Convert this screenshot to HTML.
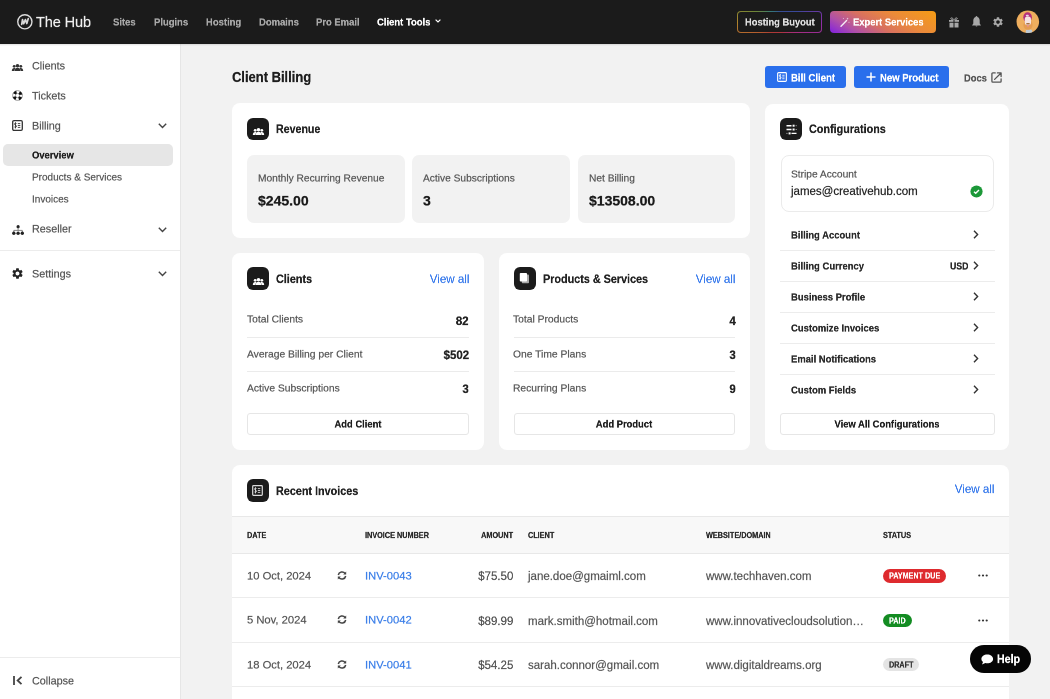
<!DOCTYPE html><html><head><meta charset="utf-8"><style>
html,body{margin:0;padding:0;width:1050px;height:699px;overflow:hidden;background:#f2f2f2;font-family:"Liberation Sans",sans-serif;}
.t{position:absolute;white-space:nowrap;will-change:transform;}
.rg{font-weight:400;-webkit-text-stroke:0.4px currentColor;}
.md{font-weight:400;-webkit-text-stroke:0.35px currentColor;}
.bd{font-weight:700;-webkit-text-stroke:0.5px currentColor;}
svg{position:absolute;overflow:visible;}
</style></head><body>

<div style="position:absolute;left:0px;top:0px;width:1050px;height:44px;background:#1b1b1b;"></div>
<svg style="left:16px;top:13px" width="18" height="18" viewBox="0 0 18 18"><circle cx="8.85" cy="8.8" r="7.1" fill="none" stroke="#dcdcdc" stroke-width="1.4"/><path d="M5.7 11.3 L6.5 6.6 L7.7 10.7 L9.4 6.6 L10.8 10.5 L12.3 5.5" fill="none" stroke="#d8d8d8" stroke-width="1.7" stroke-linejoin="round" stroke-linecap="round"/></svg>
<div class="t rg" style="left:35.90px;top:11.90px;font-size:29.00px;line-height:40px;color:#f0f0f0;transform:scale(0.5000,0.5);transform-origin:left top;letter-spacing:-0.2px;">The Hub</div>
<div class="t bd" style="left:113.00px;top:11.60px;font-size:21.00px;line-height:40px;color:#a8a8a8;transform:scale(0.4500,0.5);transform-origin:left top;">Sites</div>
<div class="t bd" style="left:154.00px;top:11.60px;font-size:21.00px;line-height:40px;color:#a8a8a8;transform:scale(0.4500,0.5);transform-origin:left top;">Plugins</div>
<div class="t bd" style="left:205.80px;top:11.60px;font-size:21.00px;line-height:40px;color:#a8a8a8;transform:scale(0.4500,0.5);transform-origin:left top;">Hosting</div>
<div class="t bd" style="left:258.90px;top:11.60px;font-size:21.00px;line-height:40px;color:#a8a8a8;transform:scale(0.4500,0.5);transform-origin:left top;">Domains</div>
<div class="t bd" style="left:316.10px;top:11.60px;font-size:21.00px;line-height:40px;color:#a8a8a8;transform:scale(0.4500,0.5);transform-origin:left top;">Pro Email</div>
<div class="t bd" style="left:377.40px;top:11.60px;font-size:21.00px;line-height:40px;color:#ffffff;transform:scale(0.4500,0.5);transform-origin:left top;">Client Tools</div>
<svg style="left:435px;top:19px" width="6" height="4" viewBox="0 0 6 4"><path d="M0.6 0.6 L3 3 L5.4 0.6" fill="none" stroke="#fff" stroke-width="1.2"/></svg>
<div style="position:absolute;left:737px;top:11px;width:85px;height:22px;border-radius:4px;opacity:0.85;background:conic-gradient(from 0deg at 50% 50%,#3a58a8 0deg,#4050b0 60deg,#a030c0 90deg,#c03090 120deg,#c83848 165deg,#c84038 220deg,#d07030 250deg,#c89830 270deg,#80983a 292deg,#3a8a8a 320deg,#3a68a0 350deg,#3a58a8 360deg);"></div>
<div style="position:absolute;left:738px;top:12px;width:83px;height:20px;background:#1b1b1b;border-radius:3px;"></div>
<div class="t bd" style="left:745.40px;top:11.80px;font-size:20.80px;line-height:40px;color:#dedede;transform:scale(0.4500,0.5);transform-origin:left top;">Hosting Buyout</div>
<div style="position:absolute;left:829.5px;top:11px;width:106px;height:22px;border-radius:4px;background:linear-gradient(30deg,#8020e0 0%,#b050a8 20%,#d87060 42%,#eb8a3a 66%,#f49c14 100%);"></div>
<svg style="left:840px;top:16.5px" width="10" height="10" viewBox="0 0 10 10"><path d="M1 9.2 L6.6 3.6" stroke="#f4ecf4" stroke-width="1.4" stroke-linecap="round"/><path d="M7.6 0.6 L7.9 1.5 L8.8 1.8 L7.9 2.1 L7.6 3 L7.3 2.1 L6.4 1.8 L7.3 1.5Z M3.4 0.8 L3.6 1.3 L4.1 1.5 L3.6 1.7 L3.4 2.2 L3.2 1.7 L2.7 1.5 L3.2 1.3Z M9 4.6 L9.2 5.1 L9.7 5.3 L9.2 5.5 L9 6 L8.8 5.5 L8.3 5.3 L8.8 5.1Z" fill="#f4ecf4"/></svg>
<div class="t bd" style="left:853.40px;top:12.10px;font-size:20.90px;line-height:40px;color:#ffffff;transform:scale(0.4500,0.5);transform-origin:left top;">Expert Services</div>
<svg style="left:949px;top:16.5px" width="10" height="11" viewBox="0 0 10 11"><path d="M4.6 2.4 C3.6 0.6 1.6 0.4 1.7 1.6 C1.8 2.6 3.4 2.5 4.6 2.4Z M5.4 2.4 C6.4 0.6 8.4 0.4 8.3 1.6 C8.2 2.6 6.6 2.5 5.4 2.4Z" fill="none" stroke="#a8a8a8" stroke-width="0.9"/><rect x="0" y="3" width="4.5" height="1.8" fill="#a8a8a8"/><rect x="5.5" y="3" width="4.5" height="1.8" fill="#a8a8a8"/><rect x="0.5" y="5.7" width="4" height="4.8" fill="#a8a8a8"/><rect x="5.5" y="5.7" width="4" height="4.8" fill="#a8a8a8"/></svg>
<svg style="left:971.5px;top:16.3px" width="9" height="11" viewBox="0 0 9 11"><path d="M4.5 0 C5 0 5.4 0.4 5.4 0.9 C7.1 1.4 7.7 2.9 7.7 4.6 L7.7 7.6 L9 9.5 L0 9.5 L1.3 7.6 L1.3 4.6 C1.3 2.9 1.9 1.4 3.6 0.9 C3.6 0.4 4 0 4.5 0Z M3.5 9.8 L5.5 9.8 C5.5 10.3 5.1 10.5 4.5 10.5 C3.9 10.5 3.5 10.3 3.5 9.8Z" fill="#a8a8a8"/></svg>
<svg style="left:992px;top:16px" width="12" height="12" viewBox="0 0 24 24"><path fill="#a8a8a8" d="M19.14 12.94c.04-.3.06-.61.06-.94 0-.32-.02-.64-.07-.94l2.03-1.58a.49.49 0 0 0 .12-.61l-1.92-3.32a.488.488 0 0 0-.59-.22l-2.39.96c-.5-.38-1.03-.7-1.62-.94l-.36-2.54a.484.484 0 0 0-.48-.41h-3.84c-.24 0-.43.17-.47.41l-.36 2.54c-.59.24-1.13.57-1.62.94l-2.39-.96c-.22-.08-.47 0-.59.22L2.74 8.87c-.12.21-.08.47.12.61l2.03 1.58c-.05.3-.09.63-.09.94s.02.64.07.94l-2.03 1.58a.49.49 0 0 0-.12.61l1.92 3.32c.12.22.37.29.59.22l2.39-.96c.5.38 1.03.7 1.62.94l.36 2.54c.05.24.24.41.48.41h3.84c.24 0 .44-.17.47-.41l.36-2.54c.59-.24 1.13-.56 1.62-.94l2.39.96c.22.08.47 0 .59-.22l1.92-3.32c.12-.22.07-.47-.12-.61l-2.01-1.58zM12 15.6c-1.98 0-3.6-1.62-3.6-3.6s1.62-3.6 3.6-3.6 3.6 1.62 3.6 3.6-1.62 3.6-3.6 3.6z"/></svg>
<svg style="left:1016px;top:10px" width="24" height="24" viewBox="0 0 24 24"><defs><clipPath id="av"><circle cx="11.8" cy="11.7" r="11.3"/></clipPath></defs><circle cx="11.8" cy="11.7" r="11.3" fill="#eeae5e"/><g clip-path="url(#av)"><rect x="9.8" y="19.4" width="6.4" height="6" rx="1.5" fill="#bccad6"/><ellipse cx="12" cy="15" rx="4.6" ry="4.8" fill="#e49c52"/><ellipse cx="11.6" cy="7.2" rx="4.3" ry="4.9" fill="#b4307c"/><rect x="8.8" y="6.6" width="6.2" height="8.6" rx="2.6" fill="#f6e4e2"/><rect x="9.8" y="4.8" width="3" height="1.6" rx="0.8" fill="#e8d8e8"/><rect x="10.2" y="13.1" width="3.6" height="1.4" rx="0.6" fill="#a8703e"/><rect x="11.2" y="15" width="1.5" height="1.8" rx="0.6" fill="#e88a9a"/></g></svg>
<div style="position:absolute;left:0px;top:44px;width:180px;height:655px;background:#ffffff;border-right:1px solid #e6e6e6;"></div>
<div style="position:absolute;left:0px;top:44px;width:1050px;height:2px;background:linear-gradient(rgba(0,0,0,0.12),rgba(0,0,0,0));"></div>
<svg style="left:12px;top:64px" width="11.0" height="7.0" viewBox="0 0 11 7"><circle cx="5.5" cy="1.8" r="1.8" fill="#333"/><circle cx="2.2" cy="2.3" r="1.4" fill="#333"/><circle cx="8.8" cy="2.3" r="1.4" fill="#333"/><path d="M2.6 7 C2.6 4.9 3.9 3.7 5.5 3.7 C7.1 3.7 8.4 4.9 8.4 7Z" fill="#333"/><path d="M-0.2 7 C-0.2 5 0.8 3.9 2.2 3.9 C3 3.9 3.6 4.3 3.6 4.3 C2.8 5.1 2.4 6 2.4 7Z" fill="#333"/><path d="M11.2 7 C11.2 5 10.2 3.9 8.8 3.9 C8 3.9 7.4 4.3 7.4 4.3 C8.2 5.1 8.6 6 8.6 7Z" fill="#333"/></svg>
<div class="t rg" style="left:32.00px;top:56.40px;font-size:21.60px;line-height:40px;color:#555;transform:scale(0.5000,0.5);transform-origin:left top;">Clients</div>
<svg style="left:12px;top:90px" width="11" height="11" viewBox="0 0 11 11"><circle cx="5.5" cy="5.5" r="4.9" fill="none" stroke="#777" stroke-width="0.7"/><circle cx="5.5" cy="5.5" r="2.1" fill="none" stroke="#777" stroke-width="0.7"/><circle cx="5.5" cy="5.5" r="3.5" fill="none" stroke="#111" stroke-width="2.9" stroke-dasharray="2.7 2.8" stroke-dashoffset="-1.4"/></svg>
<div class="t rg" style="left:32.00px;top:86.20px;font-size:21.60px;line-height:40px;color:#555;transform:scale(0.5000,0.5);transform-origin:left top;">Tickets</div>
<svg style="left:12px;top:120px" width="11" height="11" viewBox="0 0 11 11"><rect x="0.7" y="0.7" width="9.6" height="9.6" rx="1.2" fill="none" stroke="#333" stroke-width="1.3"/><path d="M4.5 3.5 C4.1 2.9 2.5 2.9 2.5 4.1 C2.5 5.3 4.5 4.9 4.5 6.3 C4.5 7.5 2.8 7.5 2.4 6.9 M3.5 2.4 V8.4 M5.8 3.6 H8.3 M5.8 5.5 H8.3 M5.8 7.4 H8.3" fill="none" stroke="#333" stroke-width="0.9"/></svg>
<div class="t rg" style="left:32.00px;top:115.70px;font-size:21.60px;line-height:40px;color:#555;transform:scale(0.5000,0.5);transform-origin:left top;">Billing</div>
<svg style="left:157.5px;top:122.5px" width="9" height="6" viewBox="0 0 9 6"><path d="M0.8 0.8 L4.5 4.5 L8.2 0.8" fill="none" stroke="#444" stroke-width="1.4"/></svg>
<div style="position:absolute;left:3px;top:144px;width:170px;height:22px;background:#e6e6e6;border-radius:5px;"></div>
<div class="t bd" style="left:32.00px;top:144.70px;font-size:20.90px;line-height:40px;color:#1e1e1e;transform:scale(0.4500,0.5);transform-origin:left top;">Overview</div>
<div class="t rg" style="left:32.00px;top:167.30px;font-size:20.00px;line-height:40px;color:#555;transform:scale(0.5000,0.5);transform-origin:left top;">Products &amp; Services</div>
<div class="t rg" style="left:32.00px;top:189.10px;font-size:20.00px;line-height:40px;color:#555;transform:scale(0.5000,0.5);transform-origin:left top;">Invoices</div>
<svg style="left:11.5px;top:224.5px" width="12" height="10" viewBox="0 0 12 10"><circle cx="6.1" cy="1.7" r="1.6" fill="#222"/><path d="M6.1 2.5 V5.4 M1.8 7.8 V5.4 H10.3 V7.8" fill="none" stroke="#555" stroke-width="0.7"/><circle cx="1.8" cy="8.2" r="1.7" fill="#222"/><circle cx="6.1" cy="8.2" r="1.7" fill="#222"/><circle cx="10.3" cy="8.2" r="1.7" fill="#222"/></svg>
<div class="t rg" style="left:32.00px;top:219.20px;font-size:21.60px;line-height:40px;color:#555;transform:scale(0.5000,0.5);transform-origin:left top;">Reseller</div>
<svg style="left:157.5px;top:226.5px" width="9" height="6" viewBox="0 0 9 6"><path d="M0.8 0.8 L4.5 4.5 L8.2 0.8" fill="none" stroke="#444" stroke-width="1.4"/></svg>
<div style="position:absolute;left:0px;top:250px;width:180px;height:1px;background:#ececec;"></div>
<svg style="left:11px;top:267px" width="13" height="13" viewBox="0 0 24 24"><path fill="#222" d="M19.14 12.94c.04-.3.06-.61.06-.94 0-.32-.02-.64-.07-.94l2.03-1.58a.49.49 0 0 0 .12-.61l-1.92-3.32a.488.488 0 0 0-.59-.22l-2.39.96c-.5-.38-1.030-.7-1.62-.94l-.36-2.54a.484.484 0 0 0-.48-.41h-3.84c-.24 0-.43.17-.47.41l-.36 2.54c-.59.24-1.13.57-1.62.94l-2.39-.96c-.22-.08-.47 0-.59.22L2.74 8.87c-.12.21-.08.47.12.61l2.03 1.58c-.05.3-.09.63-.09.94s.02.64.07.94l-2.03 1.58a.49.49 0 0 0-.12.61l1.92 3.32c.12.22.37.29.59.22l2.39-.96c.5.38 1.03.7 1.62.94l.36 2.54c.05.24.24.41.48.41h3.840c.24 0 .44-.17.47-.41l.36-2.54c.59-.24 1.13-.56 1.62-.94l2.39.96c.22.08.47 0 .59-.22l1.92-3.32c.12-.22.07-.47-.12-.61l-2.01-1.58zM12 15.6c-1.98 0-3.6-1.62-3.6-3.6s1.62-3.6 3.6-3.6 3.6 1.62 3.6 3.6-1.62 3.6-3.6 3.6z"/></svg>
<div class="t rg" style="left:32.00px;top:263.80px;font-size:21.60px;line-height:40px;color:#555;transform:scale(0.5000,0.5);transform-origin:left top;">Settings</div>
<svg style="left:157.5px;top:270.5px" width="9" height="6" viewBox="0 0 9 6"><path d="M0.8 0.8 L4.5 4.5 L8.2 0.8" fill="none" stroke="#444" stroke-width="1.4"/></svg>
<div style="position:absolute;left:0px;top:657px;width:180px;height:1px;background:#ececec;"></div>
<svg style="left:13px;top:676px" width="10" height="9" viewBox="0 0 10 9"><path d="M1 0 V9" stroke="#444" stroke-width="1.8"/><path d="M8.5 0.8 L4.6 4.5 L8.5 8.2" fill="none" stroke="#444" stroke-width="1.8"/></svg>
<div class="t rg" style="left:32.00px;top:671.00px;font-size:21.60px;line-height:40px;color:#555;transform:scale(0.5000,0.5);transform-origin:left top;">Collapse</div>
<div class="t bd" style="left:231.90px;top:67.00px;font-size:28.80px;line-height:40px;color:#1e1e1e;transform:scale(0.4500,0.5);transform-origin:left top;">Client Billing</div>
<div style="position:absolute;left:765px;top:66px;width:81px;height:22px;background:#2a6fec;border-radius:3px;"></div>
<svg style="left:777px;top:72px" width="10" height="10" viewBox="0 0 11 11"><rect x="0.7" y="0.7" width="9.6" height="9.6" rx="1" fill="none" stroke="#fff" stroke-width="1.2"/><path d="M4.5 3.5 C4.1 2.9 2.5 2.9 2.5 4.1 C2.5 5.3 4.5 4.9 4.5 6.3 C4.5 7.5 2.8 7.5 2.4 6.9 M3.5 2.4 V8.4 M5.8 3.6 H8.3 M5.8 5.5 H8.3 M5.8 7.4 H8.3" fill="none" stroke="#fff" stroke-width="0.9"/></svg>
<div class="t bd" style="left:791.10px;top:67.50px;font-size:21.20px;line-height:40px;color:#fff;transform:scale(0.4500,0.5);transform-origin:left top;">Bill Client</div>
<div style="position:absolute;left:854px;top:66px;width:95px;height:22px;background:#2a6fec;border-radius:3px;"></div>
<svg style="left:866px;top:72px" width="10" height="10" viewBox="0 0 10 10"><path d="M5 0.5 V9.5 M0.5 5 H9.5" stroke="#fff" stroke-width="1.5"/></svg>
<div class="t bd" style="left:880.00px;top:67.50px;font-size:21.20px;line-height:40px;color:#fff;transform:scale(0.4500,0.5);transform-origin:left top;">New Product</div>
<div class="t bd" style="left:963.60px;top:67.50px;font-size:20.80px;line-height:40px;color:#555;transform:scale(0.4500,0.5);transform-origin:left top;">Docs</div>
<svg style="left:991px;top:72px" width="11" height="11" viewBox="0 0 11 11"><path d="M4.2 0.9 H1.8 Q0.9 0.9 0.9 1.8 V9.2 Q0.9 10.1 1.8 10.1 H9.2 Q10.1 10.1 10.1 9.2 V6.8" fill="none" stroke="#555" stroke-width="1.3" stroke-linecap="round"/><path d="M6.4 0.9 H10.1 V4.6 M9.8 1.2 L3.6 7.4" fill="none" stroke="#555" stroke-width="1.3" stroke-linecap="round" stroke-linejoin="round"/></svg>
<div style="position:absolute;left:232px;top:103px;width:518px;height:135px;background:#fff;border-radius:8px;"></div>
<div style="position:absolute;left:247px;top:117.5px;width:22.3px;height:22.3px;background:#1b1b1b;border-radius:6px;"></div>
<svg style="left:252.5px;top:127.5px" width="11.0" height="7.0" viewBox="0 0 11 7"><circle cx="5.5" cy="1.8" r="1.8" fill="#fff"/><circle cx="2.2" cy="2.3" r="1.4" fill="#fff"/><circle cx="8.8" cy="2.3" r="1.4" fill="#fff"/><path d="M2.6 7 C2.6 4.9 3.9 3.7 5.5 3.7 C7.1 3.7 8.4 4.9 8.4 7Z" fill="#fff"/><path d="M-0.2 7 C-0.2 5 0.8 3.9 2.2 3.9 C3 3.9 3.6 4.3 3.6 4.3 C2.8 5.1 2.4 6 2.4 7Z" fill="#fff"/><path d="M11.2 7 C11.2 5 10.2 3.9 8.8 3.9 C8 3.9 7.4 4.3 7.4 4.3 C8.2 5.1 8.6 6 8.6 7Z" fill="#fff"/></svg>
<div class="t bd" style="left:276.40px;top:119.20px;font-size:23.60px;line-height:40px;color:#222;transform:scale(0.4500,0.5);transform-origin:left top;">Revenue</div>
<div style="position:absolute;left:247px;top:155px;width:157.5px;height:68px;background:#f2f2f2;border-radius:7px;"></div>
<div class="t rg" style="left:257.70px;top:167.50px;font-size:20.40px;line-height:40px;color:#555;transform:scale(0.5000,0.5);transform-origin:left top;">Monthly Recurring Revenue</div>
<div class="t bd" style="left:257.70px;top:190.50px;font-size:28.00px;line-height:40px;color:#1a1a1a;transform:scale(0.5000,0.5);transform-origin:left top;">$245.00</div>
<div style="position:absolute;left:412px;top:155px;width:157.5px;height:68px;background:#f2f2f2;border-radius:7px;"></div>
<div class="t rg" style="left:422.70px;top:167.50px;font-size:20.40px;line-height:40px;color:#555;transform:scale(0.5000,0.5);transform-origin:left top;">Active Subscriptions</div>
<div class="t bd" style="left:422.70px;top:190.50px;font-size:28.00px;line-height:40px;color:#1a1a1a;transform:scale(0.5000,0.5);transform-origin:left top;">3</div>
<div style="position:absolute;left:578px;top:155px;width:157px;height:68px;background:#f2f2f2;border-radius:7px;"></div>
<div class="t rg" style="left:588.70px;top:167.50px;font-size:20.40px;line-height:40px;color:#555;transform:scale(0.5000,0.5);transform-origin:left top;">Net Billing</div>
<div class="t bd" style="left:588.70px;top:190.50px;font-size:28.00px;line-height:40px;color:#1a1a1a;transform:scale(0.5000,0.5);transform-origin:left top;">$13508.00</div>
<div style="position:absolute;left:232px;top:252.5px;width:252px;height:197px;background:#fff;border-radius:8px;"></div>
<div style="position:absolute;left:247px;top:267.3px;width:22.3px;height:22.3px;background:#1b1b1b;border-radius:6px;"></div>
<svg style="left:252.5px;top:277.5px" width="11.0" height="7.0" viewBox="0 0 11 7"><circle cx="5.5" cy="1.8" r="1.8" fill="#fff"/><circle cx="2.2" cy="2.3" r="1.4" fill="#fff"/><circle cx="8.8" cy="2.3" r="1.4" fill="#fff"/><path d="M2.6 7 C2.6 4.9 3.9 3.7 5.5 3.7 C7.1 3.7 8.4 4.9 8.4 7Z" fill="#fff"/><path d="M-0.2 7 C-0.2 5 0.8 3.9 2.2 3.9 C3 3.9 3.6 4.3 3.6 4.3 C2.8 5.1 2.4 6 2.4 7Z" fill="#fff"/><path d="M11.2 7 C11.2 5 10.2 3.9 8.8 3.9 C8 3.9 7.4 4.3 7.4 4.3 C8.2 5.1 8.6 6 8.6 7Z" fill="#fff"/></svg>
<div class="t bd" style="left:276.00px;top:269.00px;font-size:24.00px;line-height:40px;color:#222;transform:scale(0.4500,0.5);transform-origin:left top;">Clients</div>
<div class="t rg" style="right:580.80px;top:269.00px;font-size:23.20px;line-height:40px;color:#3b7cec;transform:scale(0.5000,0.5);transform-origin:right top;">View all</div>
<div class="t rg" style="left:246.90px;top:309.40px;font-size:20.60px;line-height:40px;color:#555;transform:scale(0.5000,0.5);transform-origin:left top;">Total Clients</div>
<div class="t bd" style="right:581.20px;top:311.30px;font-size:23.00px;line-height:40px;color:#222;transform:scale(0.5000,0.5);transform-origin:right top;">82</div>
<div class="t rg" style="left:246.90px;top:343.60px;font-size:20.60px;line-height:40px;color:#555;transform:scale(0.5000,0.5);transform-origin:left top;">Average Billing per Client</div>
<div class="t bd" style="right:581.20px;top:345.30px;font-size:23.00px;line-height:40px;color:#222;transform:scale(0.5000,0.5);transform-origin:right top;">$502</div>
<div class="t rg" style="left:246.90px;top:377.80px;font-size:20.60px;line-height:40px;color:#555;transform:scale(0.5000,0.5);transform-origin:left top;">Active Subscriptions</div>
<div class="t bd" style="right:581.20px;top:379.30px;font-size:23.00px;line-height:40px;color:#222;transform:scale(0.5000,0.5);transform-origin:right top;">3</div>
<div style="position:absolute;left:247px;top:337px;width:221.6px;height:1px;background:#ebebeb;"></div>
<div style="position:absolute;left:247px;top:371.3px;width:221.6px;height:1px;background:#ebebeb;"></div>
<div style="position:absolute;left:247px;top:413.3px;width:221.6px;height:22px;background:#fff;border:1px solid #e6e6e6;border-radius:3px;box-sizing:border-box;"></div>
<div class="t bd" style="left:-142.20px;width:1000px;text-align:center;top:413.80px;font-size:20.90px;line-height:40px;color:#1e1e1e;transform:scale(0.4500,0.5);transform-origin:center top;">Add Client</div>
<div style="position:absolute;left:498.5px;top:252.5px;width:251.5px;height:197px;background:#fff;border-radius:8px;"></div>
<div style="position:absolute;left:513.5px;top:267.3px;width:22.3px;height:22.3px;background:#1b1b1b;border-radius:6px;"></div>
<svg style="left:519px;top:272px" width="11" height="13" viewBox="0 0 11 13"><rect x="2.8" y="2.6" width="7.2" height="8.6" rx="0.8" fill="#aaa"/><rect x="0.8" y="0.9" width="7.2" height="8.6" rx="0.8" fill="#fff"/></svg>
<div class="t bd" style="left:542.60px;top:269.00px;font-size:24.00px;line-height:40px;color:#222;transform:scale(0.4500,0.5);transform-origin:left top;">Products &amp; Services</div>
<div class="t rg" style="right:314.20px;top:269.00px;font-size:23.20px;line-height:40px;color:#3b7cec;transform:scale(0.5000,0.5);transform-origin:right top;">View all</div>
<div class="t rg" style="left:513.20px;top:309.40px;font-size:20.60px;line-height:40px;color:#555;transform:scale(0.5000,0.5);transform-origin:left top;">Total Products</div>
<div class="t bd" style="right:314.60px;top:311.30px;font-size:23.00px;line-height:40px;color:#222;transform:scale(0.5000,0.5);transform-origin:right top;">4</div>
<div class="t rg" style="left:513.20px;top:343.60px;font-size:20.60px;line-height:40px;color:#555;transform:scale(0.5000,0.5);transform-origin:left top;">One Time Plans</div>
<div class="t bd" style="right:314.60px;top:345.30px;font-size:23.00px;line-height:40px;color:#222;transform:scale(0.5000,0.5);transform-origin:right top;">3</div>
<div class="t rg" style="left:513.20px;top:377.80px;font-size:20.60px;line-height:40px;color:#555;transform:scale(0.5000,0.5);transform-origin:left top;">Recurring Plans</div>
<div class="t bd" style="right:314.60px;top:379.30px;font-size:23.00px;line-height:40px;color:#222;transform:scale(0.5000,0.5);transform-origin:right top;">9</div>
<div style="position:absolute;left:513.5px;top:337px;width:221.7px;height:1px;background:#ebebeb;"></div>
<div style="position:absolute;left:513.5px;top:371.3px;width:221.7px;height:1px;background:#ebebeb;"></div>
<div style="position:absolute;left:513.5px;top:413.3px;width:221.7px;height:22px;background:#fff;border:1px solid #e6e6e6;border-radius:3px;box-sizing:border-box;"></div>
<div class="t bd" style="left:124.30px;width:1000px;text-align:center;top:413.80px;font-size:20.90px;line-height:40px;color:#1e1e1e;transform:scale(0.4500,0.5);transform-origin:center top;">Add Product</div>
<div style="position:absolute;left:765px;top:103.5px;width:244px;height:346px;background:#fff;border-radius:8px;"></div>
<div style="position:absolute;left:780px;top:118px;width:22.3px;height:22.3px;background:#1b1b1b;border-radius:6px;"></div>
<svg style="left:785.5px;top:123.5px" width="11" height="11" viewBox="0 0 11 11"><path d="M0.5 1.7 H5.5 M0.5 5.5 H5.5 M5.5 9.4 H10.5" stroke="#fff" stroke-width="1.4"/><rect x="6.6" y="0.7" width="2" height="2" fill="#fff"/><rect x="6.6" y="4.5" width="2" height="2" fill="#fff"/><rect x="2.6" y="8.4" width="2" height="2" fill="#fff"/><rect x="9.7" y="1.2" width="0.9" height="1" fill="#ccc"/><rect x="9.7" y="5" width="0.9" height="1" fill="#ccc"/><rect x="0.5" y="8.9" width="0.9" height="1" fill="#ccc"/></svg>
<div class="t bd" style="left:809.20px;top:118.90px;font-size:24.00px;line-height:40px;color:#222;transform:scale(0.4500,0.5);transform-origin:left top;">Configurations</div>
<div style="position:absolute;left:780.5px;top:155px;width:213.5px;height:56.5px;background:#fff;border:1px solid #ebebeb;border-radius:8px;box-sizing:border-box;"></div>
<div class="t rg" style="left:790.60px;top:164.00px;font-size:20.40px;line-height:40px;color:#555;transform:scale(0.5000,0.5);transform-origin:left top;">Stripe Account</div>
<div class="t rg" style="left:790.60px;top:181.30px;font-size:23.00px;line-height:40px;color:#222;transform:scale(0.5000,0.5);transform-origin:left top;">james@creativehub.com</div>
<svg style="left:969.5px;top:184.5px" width="13" height="13" viewBox="0 0 13 13"><circle cx="6.5" cy="6.5" r="6.1" fill="#1c9838"/><path d="M4 6.7 L5.7 8.2 L9 5" fill="none" stroke="#fff" stroke-width="1.4"/></svg>
<div class="t bd" style="left:790.50px;top:224.80px;font-size:21.00px;line-height:40px;color:#2a2a2a;transform:scale(0.4500,0.5);transform-origin:left top;">Billing Account</div>
<svg style="left:973px;top:229.8px" width="6" height="9" viewBox="0 0 6 9"><path d="M1 0.8 L4.6 4.5 L1 8.2" fill="none" stroke="#333" stroke-width="1.4"/></svg>
<div style="position:absolute;left:780px;top:250px;width:214.5px;height:1px;background:#ececec;"></div>
<div class="t bd" style="left:790.50px;top:255.80px;font-size:21.00px;line-height:40px;color:#2a2a2a;transform:scale(0.4500,0.5);transform-origin:left top;">Billing Currency</div>
<svg style="left:973px;top:260.8px" width="6" height="9" viewBox="0 0 6 9"><path d="M1 0.8 L4.6 4.5 L1 8.2" fill="none" stroke="#333" stroke-width="1.4"/></svg>
<div style="position:absolute;left:780px;top:281px;width:214.5px;height:1px;background:#ececec;"></div>
<div class="t bd" style="left:790.50px;top:286.80px;font-size:21.00px;line-height:40px;color:#2a2a2a;transform:scale(0.4500,0.5);transform-origin:left top;">Business Profile</div>
<svg style="left:973px;top:291.8px" width="6" height="9" viewBox="0 0 6 9"><path d="M1 0.8 L4.6 4.5 L1 8.2" fill="none" stroke="#333" stroke-width="1.4"/></svg>
<div style="position:absolute;left:780px;top:312px;width:214.5px;height:1px;background:#ececec;"></div>
<div class="t bd" style="left:790.50px;top:317.80px;font-size:21.00px;line-height:40px;color:#2a2a2a;transform:scale(0.4500,0.5);transform-origin:left top;">Customize Invoices</div>
<svg style="left:973px;top:322.8px" width="6" height="9" viewBox="0 0 6 9"><path d="M1 0.8 L4.6 4.5 L1 8.2" fill="none" stroke="#333" stroke-width="1.4"/></svg>
<div style="position:absolute;left:780px;top:343px;width:214.5px;height:1px;background:#ececec;"></div>
<div class="t bd" style="left:790.50px;top:348.80px;font-size:21.00px;line-height:40px;color:#2a2a2a;transform:scale(0.4500,0.5);transform-origin:left top;">Email Notifications</div>
<svg style="left:973px;top:353.8px" width="6" height="9" viewBox="0 0 6 9"><path d="M1 0.8 L4.6 4.5 L1 8.2" fill="none" stroke="#333" stroke-width="1.4"/></svg>
<div style="position:absolute;left:780px;top:374px;width:214.5px;height:1px;background:#ececec;"></div>
<div class="t bd" style="left:790.50px;top:379.80px;font-size:21.00px;line-height:40px;color:#2a2a2a;transform:scale(0.4500,0.5);transform-origin:left top;">Custom Fields</div>
<svg style="left:973px;top:384.8px" width="6" height="9" viewBox="0 0 6 9"><path d="M1 0.8 L4.6 4.5 L1 8.2" fill="none" stroke="#333" stroke-width="1.4"/></svg>
<div class="t bd" style="right:81.80px;top:255.70px;font-size:20.60px;line-height:40px;color:#2a2a2a;transform:scale(0.4250,0.5);transform-origin:right top;">USD</div>
<div style="position:absolute;left:780px;top:413.3px;width:214.5px;height:22px;background:#fff;border:1px solid #e6e6e6;border-radius:3px;box-sizing:border-box;"></div>
<div class="t bd" style="left:387.00px;width:1000px;text-align:center;top:413.80px;font-size:20.90px;line-height:40px;color:#1e1e1e;transform:scale(0.4500,0.5);transform-origin:center top;">View All Configurations</div>
<div style="position:absolute;left:232px;top:465px;width:777px;height:260px;background:#fff;border-radius:8px;"></div>
<div style="position:absolute;left:247px;top:479.3px;width:22.3px;height:22.3px;background:#1b1b1b;border-radius:6px;"></div>
<svg style="left:252.3px;top:484.8px" width="11" height="11" viewBox="0 0 11 11"><rect x="0.7" y="0.7" width="9.6" height="9.6" rx="0.8" fill="none" stroke="#ddd" stroke-width="1.2"/><path d="M4.5 3.5 C4.1 2.9 2.5 2.9 2.5 4.1 C2.5 5.3 4.5 4.9 4.5 6.3 C4.5 7.5 2.8 7.5 2.4 6.9 M3.5 2.4 V8.4 M5.8 3.6 H8.3 M5.8 5.5 H8.3 M5.8 7.4 H8.3" fill="none" stroke="#ddd" stroke-width="0.9"/></svg>
<div class="t bd" style="left:276.20px;top:481.30px;font-size:24.00px;line-height:40px;color:#222;transform:scale(0.4500,0.5);transform-origin:left top;">Recent Invoices</div>
<div class="t rg" style="right:55.40px;top:478.80px;font-size:23.20px;line-height:40px;color:#3b7cec;transform:scale(0.5000,0.5);transform-origin:right top;">View all</div>
<div style="position:absolute;left:232px;top:516px;width:777px;height:38px;background:#f8f8f8;border-top:1px solid #e8e8e8;border-bottom:1px solid #e8e8e8;box-sizing:border-box;"></div>
<div class="t bd" style="left:246.80px;top:525.00px;font-size:16.20px;line-height:40px;color:#2a2a2a;transform:scale(0.4500,0.5);transform-origin:left top;">DATE</div>
<div class="t bd" style="left:365.20px;top:525.00px;font-size:16.20px;line-height:40px;color:#2a2a2a;transform:scale(0.4500,0.5);transform-origin:left top;">INVOICE NUMBER</div>
<div class="t bd" style="left:527.90px;top:525.00px;font-size:16.20px;line-height:40px;color:#2a2a2a;transform:scale(0.4500,0.5);transform-origin:left top;">CLIENT</div>
<div class="t bd" style="left:705.90px;top:525.00px;font-size:16.20px;line-height:40px;color:#2a2a2a;transform:scale(0.4500,0.5);transform-origin:left top;">WEBSITE/DOMAIN</div>
<div class="t bd" style="left:883.10px;top:525.00px;font-size:16.20px;line-height:40px;color:#2a2a2a;transform:scale(0.4500,0.5);transform-origin:left top;">STATUS</div>
<div class="t bd" style="right:536.60px;top:525.00px;font-size:16.20px;line-height:40px;color:#2a2a2a;transform:scale(0.4500,0.5);transform-origin:right top;">AMOUNT</div>
<div class="t rg" style="left:246.60px;top:565.90px;font-size:22.40px;line-height:40px;color:#555;transform:scale(0.5000,0.5);transform-origin:left top;">10 Oct, 2024</div>
<svg style="left:336.5px;top:571.2px" width="10" height="9" viewBox="0 0 10 9"><path d="M1.3 4 A3.8 3.6 0 0 1 8.2 2.6" fill="none" stroke="#444" stroke-width="1.5"/><path d="M9.2 0.6 L9.2 3.6 L6.2 3.6Z" fill="#444"/><path d="M8.7 5 A3.8 3.6 0 0 1 1.8 6.4" fill="none" stroke="#444" stroke-width="1.5"/><path d="M0.8 8.4 L0.8 5.4 L3.8 5.4Z" fill="#444"/></svg>
<div class="t rg" style="left:364.70px;top:565.90px;font-size:22.40px;line-height:40px;color:#3a7ee8;transform:scale(0.5000,0.5);transform-origin:left top;">INV-0043</div>
<div class="t rg" style="right:536.20px;top:566.30px;font-size:23.00px;line-height:40px;color:#555;transform:scale(0.5000,0.5);transform-origin:right top;">$75.50</div>
<div class="t rg" style="left:528.00px;top:566.30px;font-size:23.00px;line-height:40px;color:#555;transform:scale(0.5000,0.5);transform-origin:left top;">jane.doe@gmaiml.com</div>
<div class="t rg" style="left:706.20px;top:566.30px;font-size:23.00px;line-height:40px;color:#555;transform:scale(0.5000,0.5);transform-origin:left top;">www.techhaven.com</div>
<div style="position:absolute;left:232px;top:597.4px;width:777px;height:1px;background:#ececec;"></div>
<div style="position:absolute;left:978px;top:574.4px;width:10px;height:3px;"><svg width="10" height="3" viewBox="0 0 10 3" style="position:absolute;left:0;top:0"><circle cx="1.3" cy="1.5" r="1.1" fill="#333"/><circle cx="5" cy="1.5" r="1.1" fill="#333"/><circle cx="8.7" cy="1.5" r="1.1" fill="#333"/></svg></div>
<div class="t rg" style="left:246.60px;top:610.10px;font-size:22.40px;line-height:40px;color:#555;transform:scale(0.5000,0.5);transform-origin:left top;">5 Nov, 2024</div>
<svg style="left:336.5px;top:615.4px" width="10" height="9" viewBox="0 0 10 9"><path d="M1.3 4 A3.8 3.6 0 0 1 8.2 2.6" fill="none" stroke="#444" stroke-width="1.5"/><path d="M9.2 0.6 L9.2 3.6 L6.2 3.6Z" fill="#444"/><path d="M8.7 5 A3.8 3.6 0 0 1 1.8 6.4" fill="none" stroke="#444" stroke-width="1.5"/><path d="M0.8 8.4 L0.8 5.4 L3.8 5.4Z" fill="#444"/></svg>
<div class="t rg" style="left:364.70px;top:610.10px;font-size:22.40px;line-height:40px;color:#3a7ee8;transform:scale(0.5000,0.5);transform-origin:left top;">INV-0042</div>
<div class="t rg" style="right:536.20px;top:610.50px;font-size:23.00px;line-height:40px;color:#555;transform:scale(0.5000,0.5);transform-origin:right top;">$89.99</div>
<div class="t rg" style="left:528.00px;top:610.50px;font-size:23.00px;line-height:40px;color:#555;transform:scale(0.5000,0.5);transform-origin:left top;">mark.smith@hotmail.com</div>
<div class="t rg" style="left:706.20px;top:610.50px;font-size:23.00px;line-height:40px;color:#555;transform:scale(0.5000,0.5);transform-origin:left top;">www.innovativecloudsolution…</div>
<div style="position:absolute;left:232px;top:641.8px;width:777px;height:1px;background:#ececec;"></div>
<div style="position:absolute;left:978px;top:618.6px;width:10px;height:3px;"><svg width="10" height="3" viewBox="0 0 10 3" style="position:absolute;left:0;top:0"><circle cx="1.3" cy="1.5" r="1.1" fill="#333"/><circle cx="5" cy="1.5" r="1.1" fill="#333"/><circle cx="8.7" cy="1.5" r="1.1" fill="#333"/></svg></div>
<div class="t rg" style="left:246.60px;top:654.70px;font-size:22.40px;line-height:40px;color:#555;transform:scale(0.5000,0.5);transform-origin:left top;">18 Oct, 2024</div>
<svg style="left:336.5px;top:660.0px" width="10" height="9" viewBox="0 0 10 9"><path d="M1.3 4 A3.8 3.6 0 0 1 8.2 2.6" fill="none" stroke="#444" stroke-width="1.5"/><path d="M9.2 0.6 L9.2 3.6 L6.2 3.6Z" fill="#444"/><path d="M8.7 5 A3.8 3.6 0 0 1 1.8 6.4" fill="none" stroke="#444" stroke-width="1.5"/><path d="M0.8 8.4 L0.8 5.4 L3.8 5.4Z" fill="#444"/></svg>
<div class="t rg" style="left:364.70px;top:654.70px;font-size:22.40px;line-height:40px;color:#3a7ee8;transform:scale(0.5000,0.5);transform-origin:left top;">INV-0041</div>
<div class="t rg" style="right:536.20px;top:655.10px;font-size:23.00px;line-height:40px;color:#555;transform:scale(0.5000,0.5);transform-origin:right top;">$54.25</div>
<div class="t rg" style="left:528.00px;top:655.10px;font-size:23.00px;line-height:40px;color:#555;transform:scale(0.5000,0.5);transform-origin:left top;">sarah.connor@gmail.com</div>
<div class="t rg" style="left:706.20px;top:655.10px;font-size:23.00px;line-height:40px;color:#555;transform:scale(0.5000,0.5);transform-origin:left top;">www.digitaldreams.org</div>
<div style="position:absolute;left:232px;top:686.1999999999999px;width:777px;height:1px;background:#ececec;"></div>
<div style="position:absolute;left:883.2px;top:569px;width:63.2px;height:13.7px;background:#de2a2e;border-radius:7px;"></div>
<div class="t bd" style="left:889.10px;top:566.00px;font-size:16.00px;line-height:40px;color:#fff;transform:scale(0.4500,0.5);transform-origin:left top;">PAYMENT DUE</div>
<div style="position:absolute;left:883.2px;top:613.6px;width:28.8px;height:13.4px;background:#138c22;border-radius:7px;"></div>
<div class="t bd" style="left:889.10px;top:610.50px;font-size:16.00px;line-height:40px;color:#fff;transform:scale(0.4500,0.5);transform-origin:left top;">PAID</div>
<div style="position:absolute;left:883.2px;top:658.2px;width:36.3px;height:12.5px;background:#e4e4e4;border-radius:7px;"></div>
<div class="t bd" style="left:889.10px;top:654.80px;font-size:16.00px;line-height:40px;color:#333;transform:scale(0.4500,0.5);transform-origin:left top;">DRAFT</div>
<div style="position:absolute;left:970px;top:644.8px;width:61.2px;height:28px;background:#050505;border-radius:14px;"></div>
<svg style="left:981px;top:653.5px" width="12.5" height="11" viewBox="0 0 15 13"><path d="M7.5 0.5 C11.4 0.5 14.5 2.9 14.5 5.8 C14.5 8.7 11.4 11.1 7.5 11.1 C6.7 11.1 5.9 11 5.2 10.8 L1.2 12.5 L2.4 9.4 C1.2 8.4 0.5 7.2 0.5 5.8 C0.5 2.9 3.6 0.5 7.5 0.5Z" fill="#fff"/></svg>
<div class="t bd" style="left:996.90px;top:649.00px;font-size:23.60px;line-height:40px;color:#fff;transform:scale(0.4500,0.5);transform-origin:left top;">Help</div>
</body></html>
